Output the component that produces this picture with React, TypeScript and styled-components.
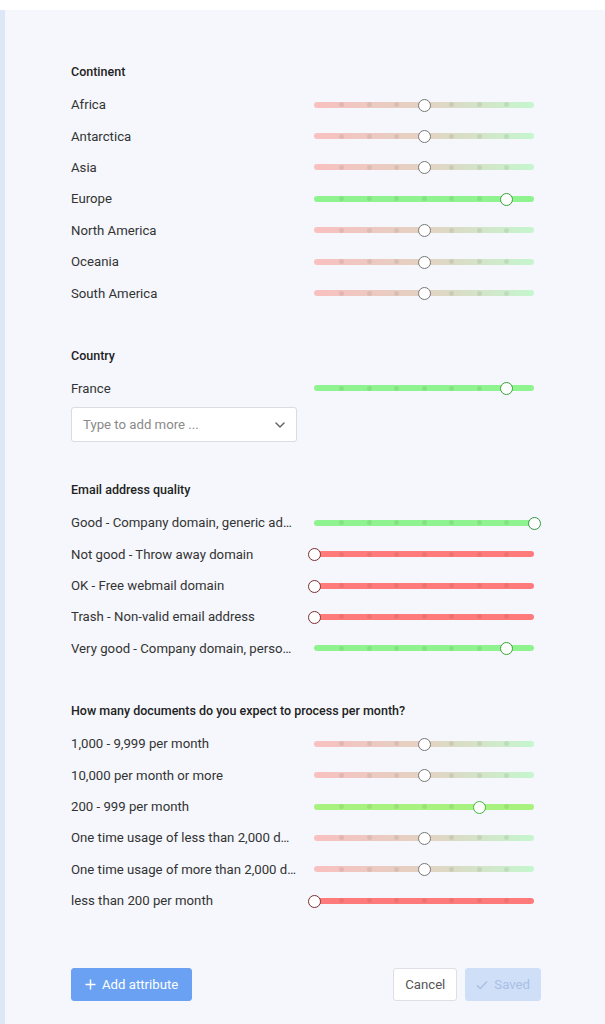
import React from "react";
import styled, { createGlobalStyle } from "styled-components";

const Global = createGlobalStyle`
  html, body { margin: 0; padding: 0; background: #ffffff; }
  body { font-family: Roboto, "Helvetica Neue", Arial, sans-serif; color: #333; -webkit-font-smoothing: antialiased; }
  * { box-sizing: border-box; }
`;

const Page = styled.div`
  padding-top: 10px;
  background: #ffffff;
  min-height: 1024px;
  display: flex;
  flex-direction: column;
`;

const Frame = styled.div`
  flex: 1;
  display: flex;
  border-left: 5px solid #dee7f8;
  background: #f5f7fc;
  min-height: 1014px;
`;

const Panel = styled.div`
  flex: 1;
  padding: 52px 64px 20px 66px;
  display: flex;
  flex-direction: column;
`;

const Section = styled.section<{ $gap?: number }>`
  display: flex;
  flex-direction: column;
  margin-bottom: ${(p) => p.$gap ?? 37}px;
`;

const Heading = styled.h3`
  margin: 0 0 7px;
  font-size: 12.5px;
  font-weight: 500;
  line-height: 20px;
  color: #222;
`;

const Row = styled.div`
  height: 31.4px;
  display: flex;
  align-items: center;
`;

const Label = styled.div`
  width: 230px;
  flex: none;
  font-size: 13.2px;
  color: #333;
  white-space: nowrap;
  overflow: hidden;
  text-overflow: ellipsis;
  padding-right: 4.5px;
`;

const SliderBox = styled.div`
  margin-left: 13px;
  width: 220px;
  height: 14px;
  position: relative;
  flex: none;
`;

const Track = styled.div<{ $bg: string }>`
  position: absolute;
  left: 0;
  right: 0;
  top: 4px;
  height: 6px;
  border-radius: 3px;
  background: ${(p) => p.$bg};
`;

const Tick = styled.span`
  position: absolute;
  top: 4.5px;
  width: 5px;
  height: 5px;
  margin-left: -2.5px;
  border-radius: 50%;
  background: rgba(0, 0, 0, 0.07);
`;

const Thumb = styled.span<{ $border: string }>`
  position: absolute;
  top: 1px;
  width: 13px;
  height: 13px;
  margin-left: -6.5px;
  border-radius: 50%;
  background: #ffffff;
  border: 1.3px solid ${(p) => p.$border};
`;

const Select = styled.div`
  margin-top: 3px;
  width: 226px;
  height: 35px;
  background: #ffffff;
  border: 1px solid #d8dce4;
  border-radius: 3px;
  display: flex;
  align-items: center;
  justify-content: space-between;
  padding: 0 11px 0 11px;
  font-size: 13.2px;
  color: #8a8a8a;
`;

const Footer = styled.div`
  margin-top: 15px;
  display: flex;
  align-items: center;
`;

const Spacer = styled.div`
  flex: 1;
`;

const Button = styled.button<{ $variant: "primary" | "default" | "disabled" }>`
  height: 33px;
  border-radius: 3px;
  font-family: inherit;
  font-size: 13.2px;
  display: inline-flex;
  align-items: center;
  gap: 6px;
  padding: 0 ${(p) => (p.$variant === "primary" ? 13 : p.$variant === "default" ? 11 : 10)}px;
  cursor: pointer;
  border: 1px solid
    ${(p) => (p.$variant === "default" ? "#dcdfe5" : p.$variant === "primary" ? "#6aa1f2" : "#cfdff8")};
  background: ${(p) => (p.$variant === "default" ? "#ffffff" : p.$variant === "primary" ? "#6aa1f2" : "#cfdff8")};
  color: ${(p) => (p.$variant === "default" ? "#555" : p.$variant === "primary" ? "#ffffff" : "#a8bfe4")};
  & + & {
    margin-left: 8px;
  }
`;

type Look = { bg: string; border: string };

const looks: Record<number, Look> = {
  0: { bg: "#ff7b7b", border: "#7a2f2f" },
  4: { bg: "linear-gradient(90deg, #f9c0c0 0%, #e3d2c2 50%, #c5f6ce 100%)", border: "#777" },
  6: { bg: "#a8f27f", border: "#3db83d" },
  7: { bg: "#8ff48f", border: "#37a437" },
  8: { bg: "#8ff48f", border: "#2e9b3e" },
};

const Slider: React.FC<{ value: number }> = ({ value }) => {
  const look = looks[value] ?? looks[4];
  return (
    <SliderBox>
      <Track $bg={look.bg} />
      {[1, 2, 3, 4, 5, 6, 7].map((i) => (
        <Tick key={i} style={{ left: `${(i / 8) * 100}%` }} />
      ))}
      <Thumb $border={look.border} style={{ left: `${(value / 8) * 100}%` }} />
    </SliderBox>
  );
};

const Chevron = () => (
  <svg width="10" height="6" viewBox="0 0 10 6" fill="none">
    <path d="M1 1l4 4 4-4" stroke="#666" strokeWidth="1.5" strokeLinecap="round" strokeLinejoin="round" />
  </svg>
);

const continents: [string, number][] = [
  ["Africa", 4],
  ["Antarctica", 4],
  ["Asia", 4],
  ["Europe", 7],
  ["North America", 4],
  ["Oceania", 4],
  ["South America", 4],
];

const email: [string, number][] = [
  ["Good - Company domain, generic address", 8],
  ["Not good - Throw away domain", 0],
  ["OK - Free webmail domain", 0],
  ["Trash - Non-valid email address", 0],
  ["Very good - Company domain, personal address", 7],
];

const docs: [string, number][] = [
  ["1,000 - 9,999 per month", 4],
  ["10,000 per month or more", 4],
  ["200 - 999 per month", 6],
  ["One time usage of less than 2,000 documents", 4],
  ["One time usage of more than 2,000 documents", 4],
  ["less than 200 per month", 0],
];

const Rows: React.FC<{ rows: [string, number][] }> = ({ rows }) => (
  <>
    {rows.map(([label, v]) => (
      <Row key={label}>
        <Label title={label}>{label}</Label>
        <Slider value={v} />
      </Row>
    ))}
  </>
);

export default function App() {
  return (
    <>
      <Global />
      <Page>
        <Frame>
          <Panel>
            <Section>
              <Heading>Continent</Heading>
              <Rows rows={continents} />
            </Section>
            <Section $gap={38}>
              <Heading>Country</Heading>
              <Rows rows={[["France", 7]]} />
              <Select>
                <span>Type to add more ...</span>
                <Chevron />
              </Select>
            </Section>
            <Section>
              <Heading>Email address quality</Heading>
              <Rows rows={email} />
            </Section>
            <Section>
              <Heading>How many documents do you expect to process per month?</Heading>
              <Rows rows={docs} />
            </Section>
            <Footer>
              <Button $variant="primary">
                <svg width="11" height="11" viewBox="0 0 11 11">
                  <path d="M5.5 0.5v10M0.5 5.5h10" stroke="#fff" strokeWidth="1.5" />
                </svg>
                Add attribute
              </Button>
              <Spacer />
              <Button $variant="default">Cancel</Button>
              <Button $variant="disabled">
                <svg width="12" height="10" viewBox="0 0 12 10">
                  <path d="M1 5.2l3.3 3.3L11 1.5" stroke="#a8bfe4" strokeWidth="1.4" fill="none" />
                </svg>
                Saved
              </Button>
            </Footer>
          </Panel>
        </Frame>
      </Page>
    </>
  );
}
